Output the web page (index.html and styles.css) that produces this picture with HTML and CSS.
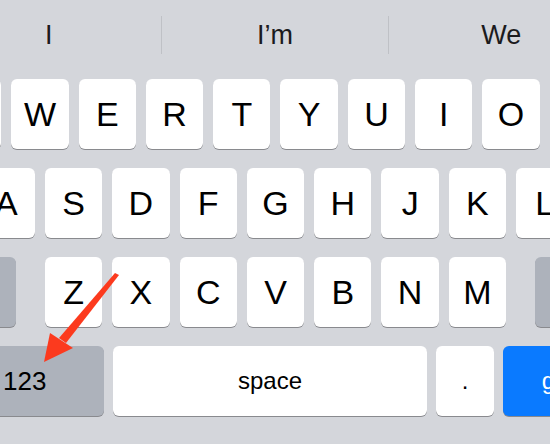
FILE: index.html
```html
<!DOCTYPE html>
<html lang="en">
<head>
  <meta charset="UTF-8" />
  <meta name="viewport" content="width=device-width, initial-scale=1.0"/>
  <title>Keyboard</title>
  <link rel="stylesheet" href="styles.css">
</head>
<body>
  <div class="suggestions">
    <div class="suggestion">I</div>
    <div class="suggestion">I’m</div>
    <div class="suggestion">We</div>
  </div>

  <div class="keyboard">
    <div class="row">
      <div class="key">Q</div>
      <div class="key">W</div>
      <div class="key">E</div>
      <div class="key">R</div>
      <div class="key">T</div>
      <div class="key">Y</div>
      <div class="key">U</div>
      <div class="key">I</div>
      <div class="key">O</div>
      <div class="key">P</div>
    </div>
    <div class="row row-middle">
      <div class="key">A</div>
      <div class="key">S</div>
      <div class="key">D</div>
      <div class="key">F</div>
      <div class="key">G</div>
      <div class="key">H</div>
      <div class="key">J</div>
      <div class="key">K</div>
      <div class="key">L</div>
    </div>
    <div class="row row-shift">
      <div class="key key-dark key-side"></div>
      <div class="letters">
        <div class="key">Z</div>
        <div class="key">X</div>
        <div class="key">C</div>
        <div class="key">V</div>
        <div class="key">B</div>
        <div class="key">N</div>
        <div class="key">M</div>
      </div>
      <div class="key key-dark key-side"></div>
    </div>
    <div class="row row-bottom">
      <div class="key key-dark key-small key-123"><span>123</span></div>
      <div class="key key-small key-space">space</div>
      <div class="key key-small key-dot">.</div>
      <div class="key key-small key-go">go</div>
    </div>
  </div>

  <svg class="arrow" width="550" height="444" viewBox="0 0 550 444">
    <polygon points="115,273 119,275 66,343 59,338" fill="#fc3a1e"/>
    <polygon points="50,333 73,348 44,362" fill="#fc3a1e"/>
  </svg>
</body>
</html>
```

FILE: styles.css
```css
body {
  font-family: 'Liberation Sans', Arial, sans-serif;
  margin: 0;
  background: #d4d6db;
  width: 550px;
  height: 444px;
  overflow: hidden;
  position: relative;
}
.suggestions {
  display: flex;
  align-items: center;
  height: 70px;
  width: 678px;
  margin-left: -64px;
}
.suggestion {
  flex: 1;
  text-align: center;
  font-size: 27px;
  color: #1b1b1d;
  line-height: 38px;
}
.suggestion + .suggestion {
  border-left: 1px solid #bfc1c6;
}
.keyboard {
  display: flex;
  flex-direction: column;
  gap: 19px;
  width: 663px;
  margin-left: -56px;
  padding-top: 9px;
}
.row {
  display: flex;
  gap: 10px;
  height: 70px;
}
.row-middle {
  padding: 0 33.6px;
}
.row-shift {
  justify-content: space-between;
}
.letters {
  display: flex;
  gap: 10px;
  width: 461px;
}
.key {
  flex: 1;
  background: #fff;
  border-radius: 6px;
  box-shadow: 0 1px 0 #898a8e;
  display: flex;
  align-items: center;
  justify-content: center;
  font-size: 34px;
  color: #000;
}
.key-dark {
  background: #adb2bb;
}
.key-side {
  flex: 0 0 72px;
}
.row-bottom {
  gap: 9px;
}
.key-small {
  font-size: 24px;
}
.key-123 {
  flex: 0 0 160px;
  justify-content: flex-start;
}
.key-123 span {
  margin-left: 59px;
  font-size: 26px;
}
.key-space {
  flex: 0 0 314px;
}
.key-dot {
  flex: 0 0 58px;
}
.key-go {
  flex: 0 0 104px;
  background: #0a7aff;
  color: #fff;
}
.arrow {
  position: absolute;
  left: 0;
  top: 0;
}
```
